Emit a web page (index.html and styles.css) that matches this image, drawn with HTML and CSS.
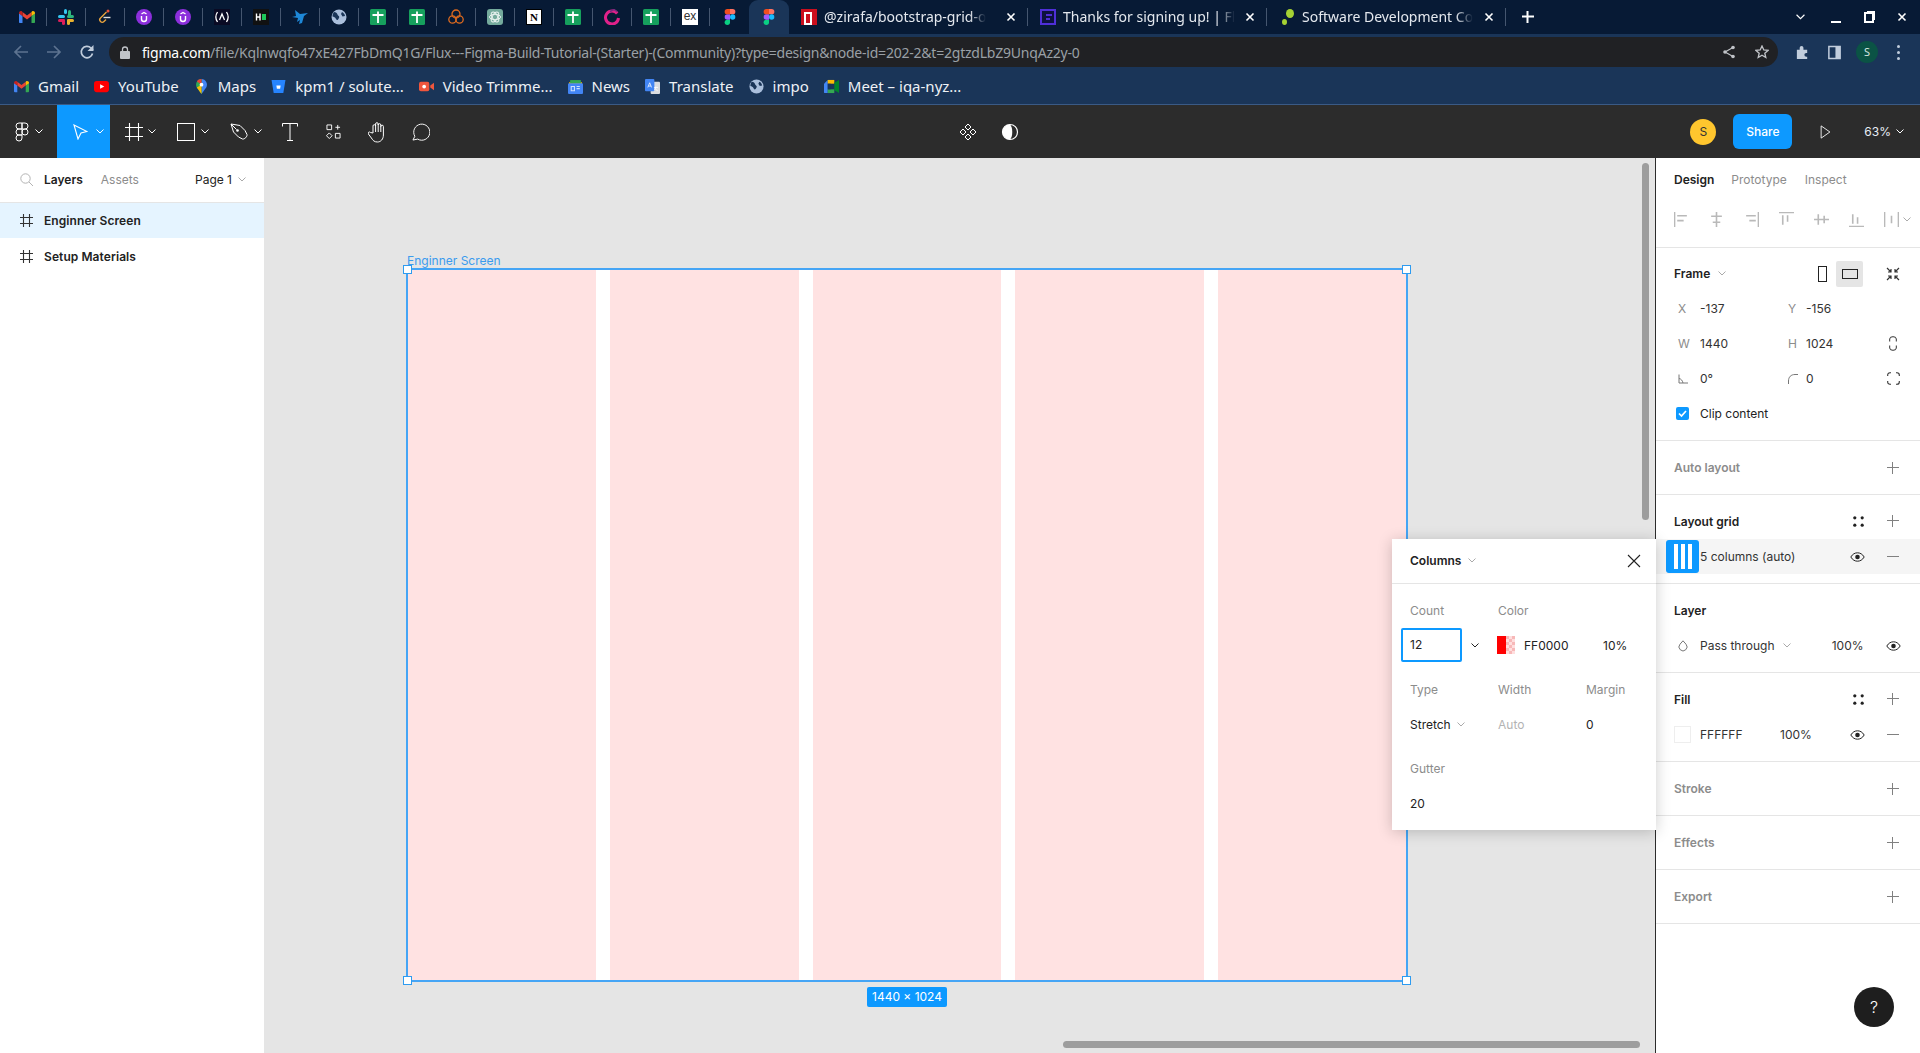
FILE: index.html
```html
<!DOCTYPE html>
<html lang="en">

<head>
    <meta charset="UTF-8">
    <meta name="viewport" content="width=device-width, initial-scale=1.0">
    <title>Flux---Figma-Build-Tutorial-(Starter)-(Community) – Figma</title>
    <link rel="stylesheet" href="styles.css">
</head>

<body>
    <!-- icon sprite -->
    <svg class="sprite">
        <symbol id="chev" viewBox="0 0 8 5"><path d="M.5.5 4 4 7.5.5" fill="none" stroke="currentColor"/></symbol>
        <symbol id="close" viewBox="0 0 10 10"><path d="M1.5 1.5l7 7M8.5 1.5l-7 7" fill="none" stroke="currentColor" stroke-width="1.6"/></symbol>
        <symbol id="plus" viewBox="0 0 12 12"><path d="M5.500 0v12M0 5.500h12" fill="none" stroke="currentColor"/></symbol>
        <symbol id="minus" viewBox="0 0 12 12"><path d="M0 5.500h12" fill="none" stroke="currentColor"/></symbol>
        <symbol id="dots" viewBox="0 0 11 11"><circle cx="1.8" cy="1.8" r="1.6"/><circle cx="9.2" cy="1.8" r="1.6"/><circle cx="1.8" cy="9.2" r="1.6"/><circle cx="9.2" cy="9.2" r="1.6"/></symbol>
        <symbol id="eye" viewBox="0 0 15 10"><path d="M.8 5C2.6 2 5 .8 7.5.8S12.400 2 14.200 5C12.400 8 10 9.200 7.500 9.200S2.600 8 .8 5z" fill="none" stroke="currentColor"/><circle cx="7.500" cy="5" r="2.300" fill="currentColor"/></symbol>
        <symbol id="hash" viewBox="0 0 13 13"><path d="M3.500 0v13M9.500 0v13M0 3.500h13M0 9.500h13" fill="none" stroke="currentColor" stroke-width="1.100"/></symbol>

        <symbol id="f-gmail" viewBox="0 0 16 12"><path d="M0 2v9c0 .6.400 1 1 1h2.500V5z" fill="#4285f4"/><path d="M16 2v9c0 .6-.4 1-1 1h-2.500V5z" fill="#34a853"/><path d="M3.500 5 8 8.400 12.500 5V1L8 4.400 3.500 1z" fill="#ea4335"/><path d="M0 2C0 .4 1.800-.5 3 .4L3.500 1v4L0 2.500z" fill="#c5221f"/><path d="M16 2c0-1.600-1.800-2.500-3-1.600l-.5.6v4L16 2.500z" fill="#fbbc04"/></symbol>
        <symbol id="f-slack" viewBox="0 0 16 16"><rect x="0" y="6" width="7" height="3" rx="1.500" fill="#36c5f0"/><rect x="6" y="0" width="3" height="5" rx="1.500" fill="#36c5f0"/><rect x="9" y="6" width="7" height="3" rx="1.500" fill="#2eb67d"/><rect x="10" y="1" width="3" height="6" rx="1.500" fill="#2eb67d"/><rect x="9" y="10" width="7" height="3" rx="1.500" fill="#ecb22e"/><rect x="9" y="10" width="3" height="6" rx="1.500" fill="#ecb22e"/><rect x="0" y="10" width="7" height="3" rx="1.500" fill="#e01e5a"/><rect x="4" y="10" width="3" height="6" rx="1.500" fill="#e01e5a"/></symbol>
        <symbol id="f-leet" viewBox="0 0 16 16"><path d="M9.500 3 3.500 9c-1 1-1 2.500 0 3.500s2.500 1 3.500 0l2-2" fill="none" stroke="#e8a33d" stroke-width="1.400"/><path d="M6.500 8.500h7" stroke="#ddd" stroke-width="1.400"/><circle cx="11" cy="2" r="1.500" fill="#e8543a"/></symbol>
        <symbol id="f-udemy" viewBox="0 0 16 16"><circle cx="8" cy="8" r="8" fill="#8c2fdc"/><path d="M5.500 7v3c0 3.300 5 3.300 5 0V7M5.500 5 8 3.500 10.500 5" fill="none" stroke="#fff" stroke-width="1.400"/></symbol>
        <symbol id="f-fcc" viewBox="0 0 16 16"><rect width="16" height="16" fill="#0a0a23"/><path d="M3.500 3C1.500 6 1.500 10 3.500 13M12.500 3c2 3 2 7 0 10M5.500 11 8 5l2.500 6" fill="none" stroke="#fff" stroke-width="1.300"/></symbol>
        <symbol id="f-hn" viewBox="0 0 16 16"><rect width="16" height="16" fill="#111"/><path d="M3.500 4.500v7M7 4.500v7M3.500 8H7" stroke="#fff" stroke-width="1.400"/><rect x="9" y="5" width="4" height="6" fill="#1ec95a"/></symbol>
        <symbol id="f-bird" viewBox="0 0 16 16"><path d="M3 1l5 4 8-1-4 3-2 7-3 1 1-4-3 2 1-4-6-1 4-1z" fill="#1e88d8"/></symbol>
        <symbol id="f-globe" viewBox="0 0 16 16"><circle cx="8" cy="8" r="7.500" fill="#aabfdc"/><path d="M3 3c2 0 3 1 3.500 2.500S9 7 8 9s-2 3-3 1-2-2-3.500-2.500C1.500 6 2 4 3 3zM11 3c1.500.5 3 2.500 3 4l-2.500.5L10 5z" fill="#1a3558"/></symbol>
        <symbol id="f-sheet" viewBox="0 0 16 16"><rect width="16" height="16" rx="1.500" fill="#16a05d"/><path d="M2.500 6h11M8 2.500V14" stroke="#fff" stroke-width="1.800"/></symbol>
        <symbol id="f-cloud" viewBox="0 0 16 16"><g fill="none" stroke="#dd6a1f" stroke-width="1.300"><circle cx="8" cy="5" r="4"/><circle cx="4.500" cy="10.500" r="3.700"/><circle cx="11.500" cy="10.500" r="3.700"/></g></symbol>
        <symbol id="f-gpt" viewBox="0 0 16 16"><rect width="16" height="16" rx="3" fill="#74aa9c"/><g fill="none" stroke="#e8f2ef" stroke-width="1"><ellipse cx="8" cy="8" rx="5.500" ry="2.700"/><ellipse cx="8" cy="8" rx="5.500" ry="2.700" transform="rotate(60 8 8)"/><ellipse cx="8" cy="8" rx="5.500" ry="2.700" transform="rotate(120 8 8)"/></g></symbol>
        <symbol id="f-ring" viewBox="0 0 16 16"><path d="M13.200 4.500A6.500 6.500 0 1 0 14.500 9" fill="none" stroke="#e0218a" stroke-width="3"/><path d="M6 2.500l4-2 3.500 2.500" fill="none" stroke="#7a2b80" stroke-width="1.500"/></symbol>
        <symbol id="f-figma" viewBox="0 0 12 18"><path d="M3 18a3 3 0 0 0 3-3v-3H3a3 3 0 0 0 0 6z" fill="#0acf83"/><path d="M0 9a3 3 0 0 1 3-3h3v6H3a3 3 0 0 1-3-3z" fill="#a259ff"/><path d="M0 3a3 3 0 0 1 3-3h3v6H3a3 3 0 0 1-3-3z" fill="#f24e1e"/><path d="M6 0h3a3 3 0 0 1 0 6H6z" fill="#ff7262"/><circle cx="9" cy="9" r="3" fill="#1abcfe"/></symbol>
        <symbol id="f-youtube" viewBox="0 0 16 12"><rect width="16" height="12" rx="3" fill="#f00"/><path d="M6.500 3.500v5L11 6z" fill="#fff"/></symbol>
        <symbol id="f-maps" viewBox="0 0 12 16"><path d="M6 0a6 6 0 0 1 5 9L6 16z" fill="#4285f4"/><path d="M6 0a6 6 0 0 0-5 9l5 7z" fill="#34a853"/><path d="M1 2.500A6 6 0 0 1 6 0v6z" fill="#ea4335"/><path d="M1 9 6 6v10z" fill="#fbbc04"/><circle cx="6" cy="6" r="2" fill="#fff"/></symbol>
        <symbol id="f-bucket" viewBox="0 0 14 14"><path d="M.5 1h13l-2 12h-9z" fill="#2684ff"/><path d="M5 6h4l-.5 3h-3z" fill="#fff"/></symbol>
        <symbol id="f-video" viewBox="0 0 16 14"><rect y="2" width="11" height="10" rx="2" fill="#f0563d"/><path d="M12 6l4-3v8l-4-3z" fill="#f0563d"/><circle cx="5.500" cy="7" r="2" fill="#fff"/></symbol>
        <symbol id="f-news" viewBox="0 0 14 14"><path d="M1 3h12v2H1z" fill="#fbbc04"/><path d="M2 1h10v3H2z" fill="#34a853"/><rect y="4" width="14" height="10" rx="1" fill="#4285f4"/><path d="M3 7h3v4H3zM8 7h3M8 9h3" stroke="#cfe0fb" fill="none"/></symbol>
        <symbol id="f-translate" viewBox="0 0 16 16"><rect x="6" y="3" width="10" height="13" rx="1" fill="#dadce0"/><rect width="10" height="13" rx="1" fill="#4285f4"/><path d="M3 9l2-5 2 5M3.700 7.500h2.600M9.500 9h4.500M11.500 8c0 2-1 3.500-2 4M10.500 10c.5 1 2 2 3 2.500" fill="none" stroke="#fff" stroke-width=".8"/></symbol>
        <symbol id="f-meet" viewBox="0 0 16 14"><path d="M0 4l4-4v14H1a1 1 0 0 1-1-1z" fill="#4285f4"/><path d="M4 0h7v4H4z" fill="#fbbc04"/><path d="M4 10h7v4H4z" fill="#34a853"/><path d="M11 3v8l5 3V0z" fill="#00832d"/><path d="M4 4h3v6H4z" fill="#1a3558"/></symbol>
    </svg>

    <!-- browser tabs -->
    <div class="tabstrip">
        <div class="pin"><svg class="fav"><use href="#f-gmail"/></svg></div>
        <div class="pin"><svg class="fav"><use href="#f-slack"/></svg></div>
        <div class="pin"><svg class="fav"><use href="#f-leet"/></svg></div>
        <div class="pin"><svg class="fav"><use href="#f-udemy"/></svg></div>
        <div class="pin"><svg class="fav"><use href="#f-udemy"/></svg></div>
        <div class="pin"><svg class="fav"><use href="#f-fcc"/></svg></div>
        <div class="pin"><svg class="fav"><use href="#f-hn"/></svg></div>
        <div class="pin"><svg class="fav"><use href="#f-bird"/></svg></div>
        <div class="pin"><svg class="fav"><use href="#f-globe"/></svg></div>
        <div class="pin"><svg class="fav"><use href="#f-sheet"/></svg></div>
        <div class="pin"><svg class="fav"><use href="#f-sheet"/></svg></div>
        <div class="pin"><svg class="fav"><use href="#f-cloud"/></svg></div>
        <div class="pin"><svg class="fav"><use href="#f-gpt"/></svg></div>
        <div class="pin"><span class="fav-notion">N</span></div>
        <div class="pin"><svg class="fav"><use href="#f-sheet"/></svg></div>
        <div class="pin"><svg class="fav"><use href="#f-ring"/></svg></div>
        <div class="pin"><svg class="fav"><use href="#f-sheet"/></svg></div>
        <div class="pin"><span class="fav-ex">ex</span></div>
        <div class="pin no-sep"><svg class="fav"><use href="#f-figma"/></svg></div>
        <div class="pin active"><svg class="fav"><use href="#f-figma"/></svg></div>
        <div class="tab">
            <span class="fav-npm"></span>
            <span class="tab-title">@zirafa/bootstrap-grid-o</span>
            <svg class="tab-x"><use href="#close"/></svg>
        </div>
        <div class="tab">
            <span class="fav-framer"></span>
            <span class="tab-title">Thanks for signing up! | Fl</span>
            <svg class="tab-x"><use href="#close"/></svg>
        </div>
        <div class="tab">
            <span class="fav-soft"><i></i><i></i></span>
            <span class="tab-title">Software Development Co</span>
            <svg class="tab-x"><use href="#close"/></svg>
        </div>
        <svg class="tab-plus"><use href="#plus"/></svg>
        <div class="win">
            <svg class="win-chev"><use href="#chev"/></svg>
            <span class="win-btn"><i class="win-min"></i></span>
            <span class="win-btn"><i class="win-max"></i></span>
            <span class="win-btn"><svg class="tab-x"><use href="#close"/></svg></span>
        </div>
    </div>

    <!-- address bar -->
    <div class="addr">
        <svg class="nav dim" viewBox="0 0 16 16"><path d="M15 8H2M8 2 2 8l6 6" fill="none" stroke="currentColor" stroke-width="1.700"/></svg>
        <svg class="nav dim" viewBox="0 0 16 16"><path d="M1 8h13M8 2l6 6-6 6" fill="none" stroke="currentColor" stroke-width="1.700"/></svg>
        <svg class="nav" viewBox="0 0 16 16"><path d="M13.500 9.500A5.700 5.700 0 1 1 12 4l2 2" fill="none" stroke="currentColor" stroke-width="1.700"/><path d="M14.500 1v6h-6z" fill="currentColor"/></svg>
        <div class="omnibox">
            <svg class="lock" viewBox="0 0 10 13"><path d="M2.500 6V3.500a2.500 2.500 0 0 1 5 0V6" fill="none" stroke="currentColor" stroke-width="1.300"/><rect y="5" width="10" height="8" rx="1" fill="currentColor"/></svg>
            <span class="url"><b>figma.com</b>/file/Kqlnwqfo47xE427FbDmQ1G/Flux---Figma-Build-Tutorial-(Starter)-(Community)?type=design&amp;node-id=202-2&amp;t=2gtzdLbZ9UnqAz2y-0</span>
            <svg class="omni-ic" viewBox="0 0 14 14"><circle cx="11" cy="2.500" r="1.800" fill="currentColor"/><circle cx="11" cy="11.500" r="1.800" fill="currentColor"/><circle cx="3" cy="7" r="1.800" fill="currentColor"/><path d="M11 2.500 3 7l8 4.500" fill="none" stroke="currentColor" stroke-width="1.200"/></svg>
            <svg class="omni-ic" viewBox="0 0 14 14"><path d="M7 1l1.800 4 4.200.4-3.200 2.800 1 4.300L7 10.200 3.200 12.500l1-4.300L1 5.400 5.200 5z" fill="none" stroke="currentColor" stroke-width="1.300"/></svg>
        </div>
        <svg class="addr-ic" viewBox="0 0 16 16"><path d="M2 5h3V3a2 2 0 0 1 4 0v2h4v3.500h-1a2 2 0 0 0 0 4h1V15H2z" fill="currentColor"/></svg>
        <svg class="addr-ic" viewBox="0 0 16 16"><path d="M2 1.500h12v13H2z" fill="none" stroke="currentColor" stroke-width="1.600"/><path d="M9 1.500h5v13H9z" fill="currentColor"/></svg>
        <span class="profile">S</span>
        <span class="kebab"><i></i><i></i><i></i></span>
    </div>

    <!-- bookmarks -->
    <div class="bookmarks">
        <span class="bm"><svg class="bm-ic"><use href="#f-gmail"/></svg>Gmail</span>
        <span class="bm"><svg class="bm-ic"><use href="#f-youtube"/></svg>YouTube</span>
        <span class="bm"><svg class="bm-ic"><use href="#f-maps"/></svg>Maps</span>
        <span class="bm"><svg class="bm-ic"><use href="#f-bucket"/></svg>kpm1 / solute...</span>
        <span class="bm"><svg class="bm-ic"><use href="#f-video"/></svg>Video Trimme...</span>
        <span class="bm"><svg class="bm-ic"><use href="#f-news"/></svg>News</span>
        <span class="bm"><svg class="bm-ic"><use href="#f-translate"/></svg>Translate</span>
        <span class="bm"><svg class="bm-ic"><use href="#f-globe"/></svg>impo</span>
        <span class="bm"><svg class="bm-ic"><use href="#f-meet"/></svg>Meet – iqa-nyz...</span>
    </div>

    <!-- figma toolbar -->
    <div class="toolbar">
        <div class="tools">
            <div class="tool t-logo">
                <svg class="tool-ic logo-ic" viewBox="0 0 14 20"><path d="M4 7H7V1H4a3 3 0 0 0 0 6zM7 1h3a3 3 0 0 1 0 6H7zM4 13H7V7H4a3 3 0 0 0 0 6zM4 19a3 3 0 0 0 3-3v-3H4a3 3 0 0 0 0 6z" fill="none" stroke="#fff"/><circle cx="10" cy="10" r="3" fill="none" stroke="#fff"/></svg>
                <svg class="chev"><use href="#chev"/></svg>
            </div>
            <div class="tool t-move">
                <svg class="tool-ic move-ic" viewBox="0 0 15 16"><path d="M1 1l13 6.500-6 1.500L5 15z" fill="none" stroke="#fff" stroke-width="1.100"/></svg>
                <svg class="chev"><use href="#chev"/></svg>
            </div>
            <div class="tool t-frame">
                <svg class="tool-ic" viewBox="0 0 18 18"><path d="M4.500 0v18M13.500 0v18M0 4.500h18M0 13.500h18" fill="none" stroke="#fff" stroke-width="1.100"/></svg>
                <svg class="chev"><use href="#chev"/></svg>
            </div>
            <div class="tool t-rect">
                <svg class="tool-ic" viewBox="0 0 18 18"><rect x=".5" y=".5" width="17" height="17" fill="none" stroke="#fff"/></svg>
                <svg class="chev"><use href="#chev"/></svg>
            </div>
            <div class="tool t-pen">
                <svg class="tool-ic" viewBox="0 0 18 18"><path d="M1 1l9 1.500 5 5 2 4c.5 2-2.500 5-4.500 4.500l-4-2-5-5zM1 1l5.500 5.500" fill="none" stroke="#fff"/><circle cx="7.500" cy="7.500" r="1.300" fill="#fff"/></svg>
                <svg class="chev"><use href="#chev"/></svg>
            </div>
            <div class="tool t-text">
                <svg class="tool-ic" viewBox="0 0 16 18"><path d="M.5 3.500v-3h15v3M8 .5v17M5 17.500h6" fill="none" stroke="#fff"/></svg>
            </div>
            <div class="tool t-wid">
                <svg class="wid-ic" viewBox="0 0 16 16"><path d="M1 1h5v5H1zM10 10h5v5h-5zM3.500 9.500l3 3-3 3-3-3zM12.500 1v5M10 3.500h5" fill="none" stroke="#fff"/></svg>
            </div>
            <div class="tool t-single">
                <svg class="hand-ic" viewBox="0 0 20 22"><path d="M5 12V5a1.300 1.300 0 0 1 2.600 0V3a1.300 1.300 0 0 1 2.600 0v1a1.300 1.300 0 0 1 2.600 0v1.500a1.300 1.300 0 0 1 2.600 0V14c0 4-2.500 7-6 7-3 0-4.500-1.500-6-4l-3-4c-1-1.500 1-2.800 2.200-1.500zM7.600 4v7M10.200 3v8M12.800 5v6" fill="none" stroke="#fff"/></svg>
            </div>
            <div class="tool t-single">
                <svg class="tool-ic" viewBox="0 0 19 19"><path d="M1 18l2-4a8.500 8.500 0 1 1 3 3z" fill="none" stroke="#fff"/></svg>
            </div>
        </div>
        <div class="tb-center">
            <svg class="center-ic" viewBox="0 0 18 18"><g fill="none" stroke="#fff"><path d="M9 1l3 3-3 3-3-3zM9 11l3 3-3 3-3-3zM4 6l3 3-3 3-3-3zM14 6l3 3-3 3-3-3z"/></g></svg>
            <svg class="center-ic" viewBox="0 0 18 18"><circle cx="9" cy="9" r="7.500" fill="none" stroke="#fff" stroke-width="1.200"/><path d="M9 1.500a7.500 7.500 0 0 0 0 15c3-2 3-13 0-15z" fill="#fff"/></svg>
        </div>
        <div class="tb-right">
            <span class="avatar">S</span>
            <span class="share">Share</span>
            <svg class="play" viewBox="0 0 12 16"><path d="M1 1l10 7-10 7z" fill="none" stroke="#fff"/></svg>
            <span class="zoom-val">63%</span>
            <svg class="chev"><use href="#chev"/></svg>
        </div>
    </div>

    <div class="main">
        <!-- layers -->
        <aside class="left">
            <div class="left-head">
                <svg class="search" viewBox="0 0 13 13"><circle cx="5.500" cy="5.500" r="4.700" fill="none" stroke="currentColor"/><path d="M9 9l4 4" stroke="currentColor"/></svg>
                <span class="tab-on">Layers</span>
                <span class="tab-off">Assets</span>
                <span class="page">Page 1</span>
                <svg class="chev-g"><use href="#chev"/></svg>
            </div>
            <div class="layer sel"><svg class="hash"><use href="#hash"/></svg>Enginner Screen</div>
            <div class="layer"><svg class="hash"><use href="#hash"/></svg>Setup Materials</div>
        </aside>

        <!-- canvas -->
        <div class="canvas">
            <div class="frame-label">Enginner Screen</div>
            <div class="frame">
                <div class="col"></div>
                <div class="col"></div>
                <div class="col"></div>
                <div class="col"></div>
                <div class="col"></div>
                <i class="handle h-tl"></i>
                <i class="handle h-tr"></i>
                <i class="handle h-bl"></i>
                <i class="handle h-br"></i>
            </div>
            <div class="size-tag">1440 × 1024</div>
            <div class="scroll-v"></div>
            <div class="scroll-h"></div>
        </div>

        <!-- properties -->
        <aside class="right">
            <div class="right-tabs">
                <span class="tab-on">Design</span>
                <span class="tab-off">Prototype</span>
                <span class="tab-off">Inspect</span>
            </div>
            <div class="aligns">
                <svg class="al" viewBox="0 0 14 14"><path d="M.5 0v14M3 3.500h9M3 8h6" fill="none" stroke="currentColor" stroke-width="1.500"/></svg>
                <svg class="al" viewBox="0 0 14 14"><path d="M7 0v14M2 4h10M3.500 9.500h7" fill="none" stroke="currentColor" stroke-width="1.500"/></svg>
                <svg class="al" viewBox="0 0 14 14"><path d="M13.500 0v14M2 3.500h9M5 8h6" fill="none" stroke="currentColor" stroke-width="1.500"/></svg>
                <svg class="al" viewBox="0 0 14 14"><path d="M0 .5h14M3.500 3v9M8 3v6" fill="none" stroke="currentColor" stroke-width="1.500"/></svg>
                <svg class="al" viewBox="0 0 14 14"><path d="M0 7h14M4 2v10M9.500 3.500v7" fill="none" stroke="currentColor" stroke-width="1.500"/></svg>
                <svg class="al" viewBox="0 0 14 14"><path d="M0 13.500h14M3.500 2v9M8 5v6" fill="none" stroke="currentColor" stroke-width="1.500"/></svg>
                <span class="al-last">
                    <svg class="al" viewBox="0 0 14 14"><path d="M.5 0v14M13.500 0v14M7 3.500v7" fill="none" stroke="currentColor" stroke-width="1.500"/></svg>
                    <svg class="chev-g"><use href="#chev"/></svg>
                </span>
            </div>

            <section class="sec">
                <div class="head">
                    <span class="title">Frame</span>
                    <svg class="chev-g frame-chev"><use href="#chev"/></svg>
                    <span class="orient">
                        <svg class="port" viewBox="0 0 9 16"><rect x=".5" y=".5" width="8" height="15" fill="none" stroke="#222"/></svg>
                        <span class="land"><svg class="land-ic" viewBox="0 0 16 10"><rect x=".5" y=".5" width="15" height="9" fill="none" stroke="#222"/></svg></span>
                    </span>
                    <svg class="fit" viewBox="0 0 14 14"><path d="M1 1l3.500 3.500M13 1 9.500 4.500M1 13l3.500-3.500M13 13 9.500 9.500M2 5h3V2M12 5H9V2M2 9h3v3M12 9H9v3" fill="none" stroke="#333" stroke-width="1.200"/></svg>
                </div>
                <div class="xy"><span class="lab">X</span><span>-137</span><span class="lab">Y</span><span>-156</span><i></i></div>
                <div class="xy"><span class="lab">W</span><span>1440</span><span class="lab">H</span><span>1024</span>
                    <svg class="lnk" viewBox="0 0 8 15"><path d="M.7 5.500V3a3.300 2.300 0 0 1 6.600 0v2.500M.7 9.500V12a3.300 2.300 0 0 0 6.600 0V9.500" fill="none" stroke="#333"/></svg>
                </div>
                <div class="xy"><svg class="ang" viewBox="0 0 10 9"><path d="M1 0v8.500h9M1 4c2 .3 3.500 2 4 4.500" fill="none" stroke="#777"/></svg><span>0°</span>
                    <svg class="ang" viewBox="0 0 10 10"><path d="M.5 10V7C.5 3 3 .5 7 .5h3" fill="none" stroke="#777"/></svg><span>0</span>
                    <svg class="corners" viewBox="0 0 13 13"><path d="M.7 4V3C.7 1.500 1.500.7 3 .7h1M9 .7h1c1.500 0 2.300.8 2.300 2.300v1M12.300 9v1c0 1.500-.8 2.300-2.300 2.300H9M4 12.300H3C1.500 12.300.7 11.500.7 10V9" fill="none" stroke="#333" stroke-width="1.100"/></svg>
                </div>
                <div class="clip">
                    <span class="check"><svg viewBox="0 0 13 13"><path d="M3 6.500l2.500 2.500L10 4" fill="none" stroke="#fff" stroke-width="1.700"/></svg></span>
                    Clip content
                </div>
            </section>

            <section class="sec-empty"><span class="title off">Auto layout</span><svg class="ctl c-grey"><use href="#plus"/></svg></section>

            <section class="sec">
                <div class="head">
                    <span class="title">Layout grid</span>
                    <span class="ctls"><svg class="ctl c-dots"><use href="#dots"/></svg><svg class="ctl c-grey"><use href="#plus"/></svg></span>
                </div>
                <div class="row row-on">
                    <span class="grid-ic"><i></i><i></i><i></i></span>
                    <span>5 columns (auto)</span>
                    <span class="ctls"><svg class="ctl c-eye"><use href="#eye"/></svg><svg class="ctl c-grey"><use href="#minus"/></svg></span>
                </div>
            </section>

            <section class="sec">
                <div class="head"><span class="title">Layer</span></div>
                <div class="row">
                    <span class="drop-cell"><svg class="drop" viewBox="0 0 10 12"><path d="M5 .8 8 4.200a4 4 0 1 1-6 0z" fill="none" stroke="#777"/></svg></span>
                    <span>Pass through</span>
                    <svg class="chev-g pass-chev"><use href="#chev"/></svg>
                    <span class="ctls"><span>100%</span><svg class="ctl c-eye"><use href="#eye"/></svg></span>
                </div>
            </section>

            <section class="sec">
                <div class="head">
                    <span class="title">Fill</span>
                    <span class="ctls"><svg class="ctl c-dots"><use href="#dots"/></svg><svg class="ctl c-grey"><use href="#plus"/></svg></span>
                </div>
                <div class="row">
                    <span class="drop-cell"><i class="fill-sw"></i></span>
                    <span class="hex">FFFFFF</span>
                    <span>100%</span>
                    <span class="ctls"><svg class="ctl c-eye"><use href="#eye"/></svg><svg class="ctl c-grey"><use href="#minus"/></svg></span>
                </div>
            </section>

            <section class="sec-empty"><span class="title off">Stroke</span><svg class="ctl c-grey"><use href="#plus"/></svg></section>
            <section class="sec-empty"><span class="title off">Effects</span><svg class="ctl c-grey"><use href="#plus"/></svg></section>
            <section class="sec-empty"><span class="title off">Export</span><svg class="ctl c-grey"><use href="#plus"/></svg></section>

            <div class="help">?</div>
        </aside>

        <!-- grid popover -->
        <div class="pop">
            <div class="pop-head">
                <span class="title">Columns</span>
                <svg class="chev-g"><use href="#chev"/></svg>
                <svg class="pop-x" viewBox="0 0 14 14"><path d="M1 1l12 12M13 1 1 13" fill="none" stroke="#222" stroke-width="1.100"/></svg>
            </div>
            <div class="band">
                <span class="lab">Count</span>
                <span class="lab wide">Color</span>
                <span class="cell">
                    <span class="count">12</span>
                    <svg class="chev count-chev"><use href="#chev"/></svg>
                </span>
                <span class="cell wide">
                    <i class="swatch"></i>
                    <span class="hex-pop">FF0000</span>
                    <span>10%</span>
                </span>
            </div>
            <div class="band">
                <span class="lab">Type</span>
                <span class="lab">Width</span>
                <span class="lab">Margin</span>
                <span class="cell">Stretch<svg class="chev-g stretch-chev"><use href="#chev"/></svg></span>
                <span class="cell auto">Auto</span>
                <span class="cell">0</span>
            </div>
            <div class="band">
                <span class="lab">Gutter</span>
                <span class="lab"></span>
                <span class="lab"></span>
                <span class="cell">20</span>
            </div>
        </div>
    </div>
</body>

</html>
```

FILE: styles.css
```css
* {
    margin: 0;
    padding: 0;
    box-sizing: border-box;
}

html,
body {
    width: 1920px;
    height: 1053px;
    overflow: hidden;
}

body {
    display: flex;
    flex-direction: column;
    font-family: "Inter", "Liberation Sans", sans-serif;
    font-size: 12px;
    color: #222;
    background: #fff;
}

svg {
    display: block;
    flex: none;
}

i {
    display: block;
}

.sprite {
    display: none;
}

/* tab strip */
.tabstrip {
    height: 34px;
    flex: none;
    display: flex;
    align-items: center;
    padding-left: 8px;
    background: #071a35;
    color: #fff;
    font-family: "Noto Sans", sans-serif;
    font-size: 14px;
}

.pin {
    width: 39px;
    height: 18px;
    display: flex;
    align-items: center;
    justify-content: center;
    border-right: 1px solid #45566f;
}

.pin.no-sep {
    border-right: none;
}

.pin.active {
    width: 40px;
    height: 34px;
    border: none;
    background: #1a3558;
    border-radius: 9px 9px 0 0;
}

.fav {
    width: 16px;
    height: 16px;
}

.fav-notion {
    width: 16px;
    height: 16px;
    background: #fff;
    border: 1px solid #000;
    color: #000;
    font: bold 11px/14px "Liberation Serif", serif;
    text-align: center;
}

.fav-ex {
    width: 16px;
    height: 16px;
    background: #fff;
    color: #333;
    font: 12px/15px "Liberation Sans", sans-serif;
    text-align: center;
}

.tab {
    width: 239px;
    height: 18px;
    display: flex;
    align-items: center;
    padding: 0 11px 0 12px;
    border-right: 1px solid #45566f;
}

.fav-npm {
    width: 16px;
    height: 16px;
    flex: none;
    background: #cb0f1e;
    border: 3px solid #cb0f1e;
    border-right-width: 5px;
    border-bottom: none;
    box-shadow: inset 0 0 0 2px #fff;
}

.fav-framer {
    width: 16px;
    height: 16px;
    flex: none;
    border: 2px solid #4f2fd8;
    background: linear-gradient(#4f2fd8, #4f2fd8) 4px 3px / 6px 2px no-repeat, linear-gradient(#4f2fd8, #4f2fd8) 4px 7px / 4px 2px no-repeat, #0d1240;
}

.fav-soft {
    width: 16px;
    height: 16px;
    flex: none;
    position: relative;
}

.fav-soft i {
    position: absolute;
    border-radius: 50%;
    background: #a5d233;
}

.fav-soft i:nth-child(1) {
    left: 7px;
    top: 0;
    width: 8px;
    height: 9px;
}

.fav-soft i:nth-child(2) {
    left: 3px;
    top: 10px;
    width: 5px;
    height: 6px;
}

.tab-title {
    margin-left: 7px;
    margin-bottom: 2px;
    white-space: nowrap;
    color: #e4e8ee;
    -webkit-mask-image: linear-gradient(90deg, #000 90%, transparent);
    mask-image: linear-gradient(90deg, #000 90%, transparent);
}

.tab-x {
    width: 10px;
    height: 10px;
    margin-left: auto;
    color: #fff;
}

.tab-plus {
    width: 12px;
    height: 12px;
    margin-left: 16px;
    color: #fff;
    stroke-width: 2;
    stroke: #fff;
}

.win {
    margin-left: auto;
    display: flex;
    align-items: center;
    padding-right: 2px;
}

.win-chev {
    width: 9px;
    height: 6px;
    margin-right: 14px;
    color: #fff;
}

.win-btn {
    width: 33px;
    display: flex;
    justify-content: center;
}

.win-btn .tab-x {
    margin: 0;
}

.win-min {
    width: 10px;
    height: 2px;
    margin-top: 9px;
    background: #fff;
}

.win-max {
    width: 10px;
    height: 11px;
    border: 2px solid #fff;
    box-shadow: 2px -2px 0 -1px #fff;
}

/* address bar */
.addr {
    height: 36px;
    flex: none;
    display: flex;
    align-items: center;
    padding-left: 13px;
    background: #1a3558;
    color: #c1cddc;
}

.nav {
    width: 16px;
    height: 16px;
    margin-right: 17px;
}

.nav.dim {
    color: #5d7390;
}

.omnibox {
    width: 1669px;
    height: 30px;
    margin-left: -3px;
    display: flex;
    align-items: center;
    padding: 0 9px 0 11px;
    border-radius: 15px;
    background: #202124;
    color: #c1c4c9;
}

.lock {
    width: 10px;
    height: 13px;
    margin-right: 12px;
}

.url {
    flex: 1;
    font-family: "Noto Sans", sans-serif;
    font-size: 14px;
    letter-spacing: -.22px;
    color: #9aa0a6;
    white-space: nowrap;
}

.url b {
    font-weight: 400;
    color: #fff;
}

.omni-ic {
    width: 14px;
    height: 14px;
    margin-left: 19px;
}

.addr-ic {
    width: 15px;
    height: 15px;
    margin-left: 17px;
}

.profile {
    width: 22px;
    height: 22px;
    margin-left: 14px;
    border-radius: 50%;
    background: #0b5345;
    color: #d5e6e0;
    font: 11px/22px "Noto Sans", sans-serif;
    text-align: center;
}

.kebab {
    margin-left: 19px;
    display: flex;
    flex-direction: column;
    gap: 3px;
}

.kebab i {
    width: 3px;
    height: 3px;
    border-radius: 50%;
    background: #c1cddc;
}

/* bookmarks */
.bookmarks {
    height: 35px;
    flex: none;
    display: flex;
    align-items: center;
    padding: 0 0 2px 14px;
    gap: 15px;
    background: #1a3558;
    border-bottom: 1px solid #3a5a85;
    color: #eef1f5;
    font-family: "Noto Sans", sans-serif;
    font-size: 15px;
    white-space: nowrap;
}

.bm {
    display: flex;
    align-items: center;
    gap: 9px;
}

.bm-ic {
    width: 15px;
    height: 15px;
}

/* toolbar */
.toolbar {
    height: 53px;
    flex: none;
    display: flex;
    align-items: center;
    background: #2c2c2c;
    color: #fff;
}

.tools {
    width: 950px;
    height: 100%;
    display: flex;
}

.tool {
    height: 100%;
    display: flex;
    align-items: center;
}

.tool-ic {
    width: 18px;
    height: 18px;
}

.logo-ic {
    width: 14px;
    height: 20px;
}

.move-ic {
    width: 15px;
    height: 16px;
}

.hand-ic {
    width: 20px;
    height: 22px;
}

.wid-ic {
    width: 15px;
    height: 15px;
}

.chev {
    width: 8px;
    height: 5px;
    color: #fff;
}

.t-logo {
    width: 57px;
    padding-left: 15px;
    gap: 6px;
}

.t-move {
    width: 53px;
    padding-left: 16px;
    gap: 8px;
    background: #0d99ff;
}

.t-frame {
    width: 54px;
    padding-left: 15px;
    gap: 5px;
}

.t-rect {
    width: 55px;
    padding-left: 13px;
    gap: 6px;
}

.t-pen {
    width: 51px;
    padding-left: 11px;
    gap: 6px;
}

.t-text {
    width: 40px;
    justify-content: center;
}

.t-wid {
    width: 46px;
    justify-content: center;
}

.t-single {
    width: 43px;
    justify-content: center;
}

.tb-center {
    display: flex;
    gap: 6px;
}

.center-ic {
    width: 18px;
    height: 18px;
    margin: 0 9px;
}

.tb-right {
    margin-left: auto;
    display: flex;
    align-items: center;
    padding-right: 16px;
}

.avatar {
    width: 26px;
    height: 26px;
    border-radius: 50%;
    background: #ffc62e;
    color: #333;
    line-height: 26px;
    text-align: center;
}

.share {
    width: 59px;
    height: 35px;
    margin-left: 17px;
    border-radius: 6px;
    background: #0d99ff;
    font-weight: 500;
    line-height: 35px;
    text-align: center;
}

.play {
    width: 11px;
    height: 14px;
    margin-left: 28px;
}

.zoom-val {
    margin-left: 33px;
    margin-right: 5px;
    color: #e8eef5;
}

/* main area */
.main {
    flex: 1;
    min-height: 0;
    display: flex;
    position: relative;
}

.left {
    width: 264px;
    flex: none;
    background: #fff;
}

.left-head {
    height: 45px;
    display: flex;
    align-items: center;
    padding: 0 0 2px 20px;
    border-bottom: 1px solid #e5e5e5;
}

.search {
    width: 13px;
    height: 13px;
    margin-right: 11px;
    color: #b3b3b3;
}

.tab-on {
    font-weight: 600;
    color: #222;
}

.tab-off {
    color: #8c8c8c;
    margin-left: 18px;
}

.page {
    margin-left: auto;
    margin-right: 6px;
}

.chev-g {
    width: 8px;
    height: 5px;
    color: #aaa;
}

.left-head .chev-g {
    margin-right: 18px;
}

.layer {
    height: 36px;
    display: flex;
    align-items: center;
    padding-left: 20px;
    font-weight: 600;
    letter-spacing: .08px;
}

.layer.sel {
    height: 35px;
    background: #e5f4ff;
}

.hash {
    width: 13px;
    height: 13px;
    margin-right: 11px;
    color: #333;
}

/* canvas */
.canvas {
    flex: 1;
    min-width: 0;
    position: relative;
    background: #e5e5e5;
}

.frame-label {
    position: absolute;
    left: 143px;
    top: 95px;
    font-size: 12px;
    line-height: 15px;
    color: #3b9bee;
}

.frame {
    position: absolute;
    left: 143px;
    top: 111px;
    width: 1000px;
    height: 712px;
    display: flex;
    gap: 14px;
    background: #fff;
    border: 1px solid #45a5f5;
    box-shadow: 0 0 0 1px #45a5f5;
}

.col {
    flex: 1;
    background: #ffe2e2;
}

.handle {
    position: absolute;
    width: 9px;
    height: 9px;
    background: #fff;
    border: 1.5px solid #2e9bf0;
}

.h-tl {
    left: -5px;
    top: -5px;
}

.h-tr {
    right: -5px;
    top: -5px;
}

.h-bl {
    left: -5px;
    bottom: -5px;
}

.h-br {
    right: -5px;
    bottom: -5px;
}

.size-tag {
    position: absolute;
    left: 603px;
    top: 829px;
    width: 80px;
    height: 20px;
    border-radius: 2px;
    background: #0d99ff;
    color: #fff;
    font-size: 12px;
    line-height: 20px;
    text-align: center;
}

.scroll-v {
    position: absolute;
    left: 1378px;
    top: 5px;
    width: 7px;
    height: 357px;
    border-radius: 4px;
    background: #9d9d9d;
}

.scroll-h {
    position: absolute;
    left: 799px;
    top: 883px;
    width: 577px;
    height: 7px;
    border-radius: 4px;
    background: #9d9d9d;
}

/* right panel */
.right {
    width: 265px;
    flex: none;
    position: relative;
    background: #fff;
    border-left: 1px solid #2c2c2c;
}

.right-tabs {
    height: 42px;
    display: flex;
    align-items: center;
    padding-left: 18px;
}

.right-tabs .tab-off {
    margin-left: 17px;
}

.right-tabs .tab-off:last-child {
    margin-left: 18px;
}

.aligns {
    height: 48px;
    display: flex;
    align-items: flex-start;
    padding: 12px 0 0 18px;
    gap: 20px;
    color: #b9b9b9;
    border-bottom: 1px solid #e5e5e5;
}

.al {
    width: 15px;
    height: 15px;
}

.al-last {
    display: flex;
    align-items: center;
    gap: 4px;
}

.sec {
    padding: 8px 0 9px;
    border-bottom: 1px solid #e5e5e5;
}

.head {
    height: 36px;
    display: flex;
    align-items: center;
    padding-left: 18px;
}

.sec:first-of-type .head {
    height: 35px;
}

.title {
    font-weight: 600;
    color: #222;
}

.title.off {
    color: #8c8c8c;
}

.frame-chev {
    margin-left: 8px;
}

.orient {
    margin-left: 92px;
    display: flex;
    align-items: center;
}

.port {
    width: 9px;
    height: 16px;
}

.land {
    width: 27px;
    height: 26px;
    margin-left: 9px;
    display: flex;
    align-items: center;
    justify-content: center;
    border-radius: 2px;
    background: #e5e5e5;
}

.land-ic {
    width: 16px;
    height: 10px;
}

.fit {
    width: 14px;
    height: 14px;
    margin-left: 23px;
}

.xy {
    height: 35px;
    display: grid;
    grid-template-columns: 44px 88px 18px 72px 30px;
    align-items: center;
    color: #333;
}

.xy .lab:first-child,
.xy>svg:first-child {
    margin-left: 22px;
}

.lab {
    color: #8c8c8c;
}

.ang {
    width: 10px;
    height: 10px;
}

.lnk {
    width: 8px;
    height: 15px;
    margin-left: 11px;
}

.corners {
    width: 13px;
    height: 13px;
    margin-left: 9px;
}

.clip {
    height: 35px;
    display: flex;
    align-items: center;
    padding-left: 20px;
}

.check {
    width: 13px;
    height: 13px;
    margin-right: 11px;
    border-radius: 2px;
    background: #0d99ff;
}

.sec-empty {
    height: 54px;
    display: flex;
    align-items: center;
    justify-content: space-between;
    padding: 0 21px 0 18px;
    border-bottom: 1px solid #e5e5e5;
}

.ctl {
    width: 12px;
    height: 12px;
}

.c-grey {
    color: #808080;
}

.c-dots {
    width: 11px;
    height: 11px;
    margin-right: 1.5px;
    fill: #222;
}

.c-eye {
    width: 15px;
    height: 10px;
    color: #222;
}

.ctls {
    margin-left: auto;
    display: flex;
    align-items: center;
    gap: 22px;
    padding-right: 21px;
}

.ctls>.c-eye:last-child {
    margin-right: -1.5px;
}

.row {
    height: 35px;
    display: flex;
    align-items: center;
    color: #333;
}

.row-on {
    background: #f5f5f5;
}

.grid-ic {
    width: 33px;
    height: 33px;
    margin-left: 10px;
    margin-right: 1px;
    display: flex;
    justify-content: center;
    align-items: center;
    gap: 3px;
    border-radius: 3px;
    background: #0d99ff;
}

.grid-ic i {
    width: 4px;
    height: 25px;
    background: #fff;
}

.drop-cell {
    width: 44px;
    padding-left: 18px;
}

.drop {
    width: 10px;
    height: 12px;
    margin-left: 4px;
}

.pass-chev {
    margin-left: 8px;
}

.fill-sw {
    width: 17px;
    height: 17px;
    background: #fff;
    border: 1px solid #eee;
}

.hex {
    width: 80px;
}

.help {
    position: absolute;
    right: 26px;
    top: 829px;
    width: 40px;
    height: 40px;
    border-radius: 50%;
    background: #1e1e1e;
    color: #fff;
    font-size: 16px;
    font-weight: 300;
    line-height: 40px;
    text-align: center;
}

/* grid popover */
.pop {
    position: absolute;
    left: 1392px;
    top: 381px;
    width: 264px;
    height: 291px;
    z-index: 2;
    background: #fff;
    box-shadow: 0 2px 14px rgba(0, 0, 0, .2);
}

.pop-head {
    height: 45px;
    display: flex;
    align-items: center;
    gap: 7px;
    padding: 0 0 1px 18px;
    border-bottom: 1px solid #e5e5e5;
}

.pop-x {
    width: 14px;
    height: 14px;
    margin-left: auto;
    margin-right: 15px;
}

.band {
    display: grid;
    grid-template-columns: 88px 88px 1fr;
    grid-template-rows: 20px 34px;
    row-gap: 8px;
    margin-bottom: 17px;
    padding-left: 18px;
    align-items: center;
}

.pop-head+.band {
    margin-top: 16px;
}

.wide {
    grid-column: span 2;
}

.cell {
    display: flex;
    align-items: center;
    color: #222;
}

.count {
    width: 61px;
    height: 34px;
    margin-left: -9px;
    padding-left: 7px;
    border: 2px solid #0d99ff;
    border-radius: 2px;
    line-height: 30px;
}

.count-chev {
    margin-left: 9px;
    color: #222;
}

.swatch {
    width: 18px;
    height: 18px;
    margin-left: -1px;
    background: linear-gradient(90deg, #f00 50%, transparent 50%), conic-gradient(#f7b8b8 25%, #ffdede 0 50%, #f7b8b8 0 75%, #ffdede 0) 0 0 / 6px 6px;
}

.hex-pop {
    width: 79px;
    margin-left: 9px;
}

.stretch-chev {
    margin-left: 6px;
}

.auto {
    color: #b3b3b3;
}
```
